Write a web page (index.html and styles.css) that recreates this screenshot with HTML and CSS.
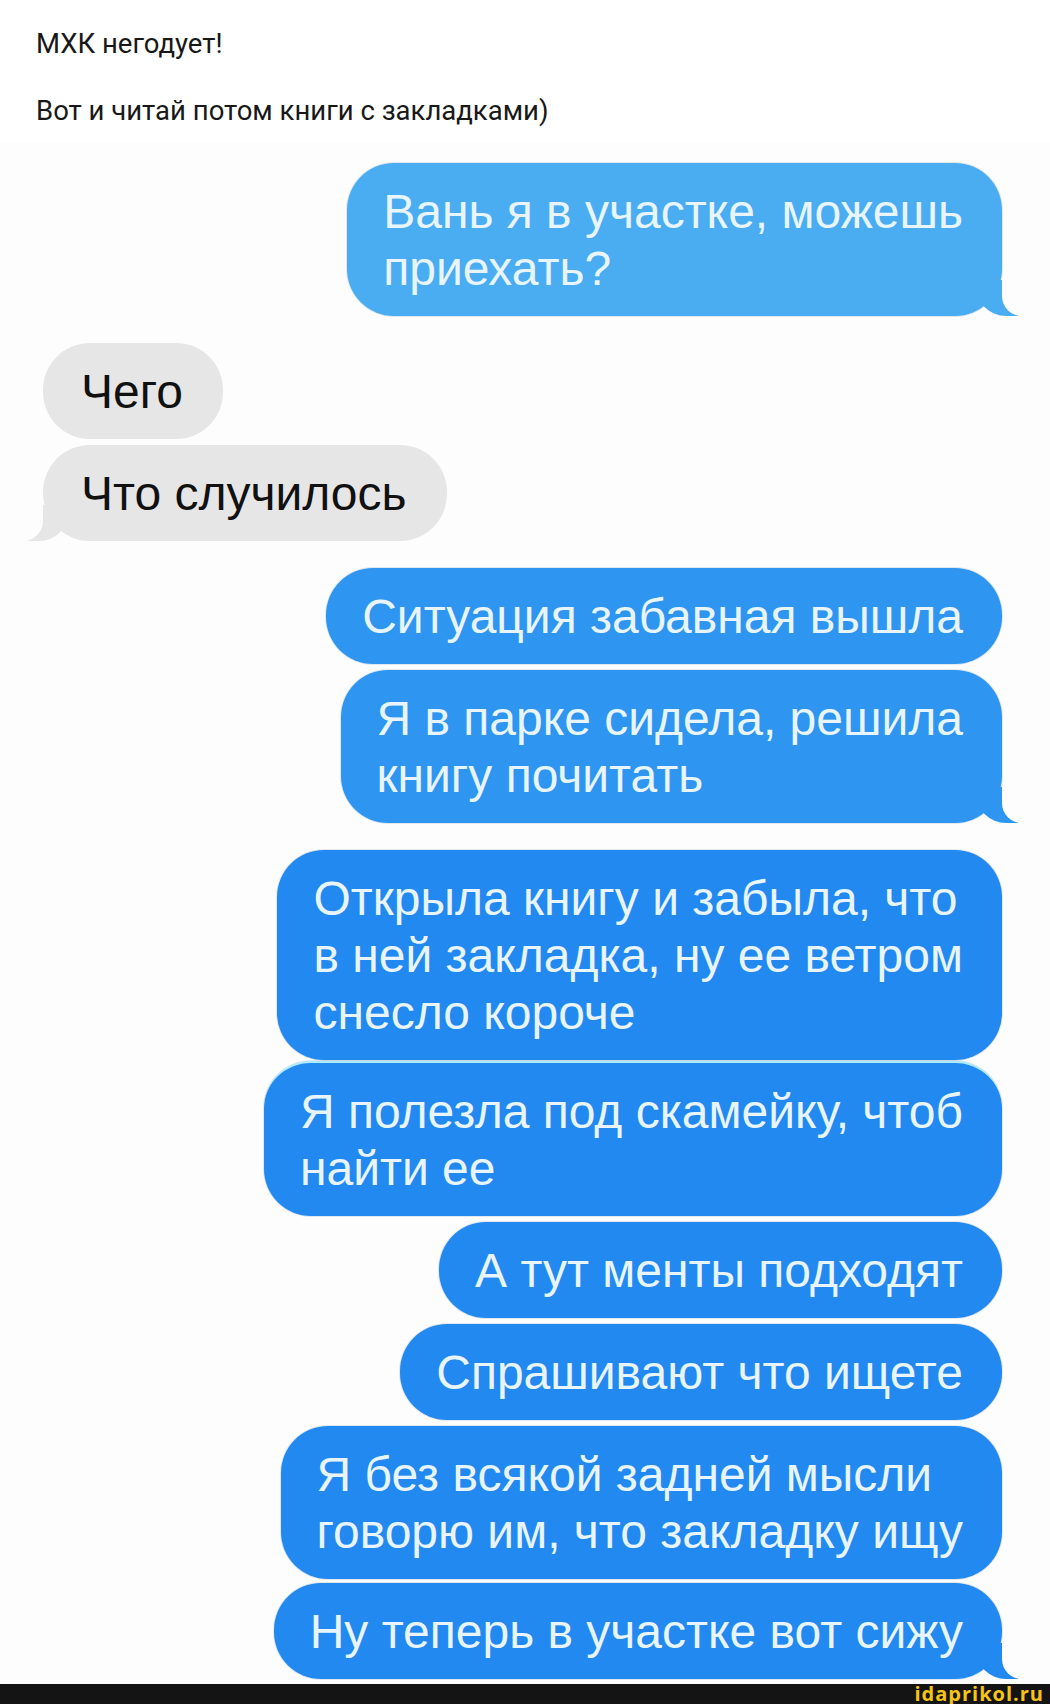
FILE: index.html
```html
<!DOCTYPE html>
<html lang="ru">
<head>
    <meta charset="UTF-8">
    <meta name="viewport" content="width=device-width, initial-scale=1.0">
    <title>МХК негодует!</title>
    <link rel="stylesheet" href="styles.css">
</head>
<body>
    <header class="intro">
        <p>МХК негодует!</p>
        <p>Вот и читай потом книги с закладками)</p>
    </header>
    <main class="chat">
        <div class="msg out light tail first">Вань я в участке, можешь<br>приехать?</div>

        <div class="msg in group">Чего</div>
        <div class="msg in tail">Что случилось</div>

        <div class="msg out mid group">Ситуация забавная вышла</div>
        <div class="msg out mid tail">Я в парке сидела, решила<br>книгу почитать</div>

        <div class="msg out group">Открыла книгу и забыла, что<br>в ней закладка, ну ее ветром<br>снесло короче</div>
        <div class="msg out seam">Я полезла под скамейку, чтоб<br>найти ее</div>
        <div class="msg out">А тут менты подходят</div>
        <div class="msg out">Спрашивают что ищете</div>
        <div class="msg out">Я без всякой задней мысли<br>говорю им, что закладку ищу</div>
        <div class="msg out tail last">Ну теперь в участке вот сижу</div>
    </main>
    <footer class="watermark">
        <span>idaprikol.ru</span>
    </footer>
</body>
</html>
```

FILE: styles.css
```css
body {
    margin: 0;
    background-color: #fff;
    font-family: Roboto, "Liberation Sans", sans-serif;
}
.intro {
    padding: 28px 36px 16px;
    color: #181818;
    font-size: 27.5px;
}
.intro p {
    margin: 0;
    line-height: 32px;
}
.intro p + p {
    margin-top: 35px;
}
.chat {
    background-color: #fdfdfd;
    padding: 20px 48px 5px 43px;
    display: flex;
    flex-direction: column;
    align-items: flex-end;
    font-family: "Liberation Sans", Arial, sans-serif;
    font-size: 48px;
    line-height: 57px;
}
.msg {
    position: relative;
    padding: 19.5px 39px 19.5px 36px;
    border-radius: 47px;
    margin-top: 6px;
    white-space: nowrap;
    background-color: #2189f0;
    color: #e8f5ff;
    box-shadow: 0 0 0 1px rgba(20, 70, 130, 0.12);
}
.msg.light {
    background-color: #4aadf2;
}
.msg.mid {
    background-color: #2e95f0;
}
.msg.in {
    align-self: flex-start;
    background-color: #e6e6e6;
    color: #111;
    padding: 19.5px 40px 19.5px 38px;
    box-shadow: none;
}
.msg.first {
    margin-top: 0;
}
.msg.group {
    margin-top: 27px;
}
.msg.seam {
    margin-top: 1px;
    border-top: 2px solid #a9ecff;
}
.msg.last {
    margin-top: 4px;
}

/* bubble tails */
.msg.tail::before {
    content: "";
    position: absolute;
    bottom: 0;
    right: -16px;
    width: 42px;
    height: 36px;
    background: inherit;
    border-bottom-left-radius: 30px;
}
.msg.tail::after {
    content: "";
    position: absolute;
    bottom: 0;
    right: -22px;
    width: 22px;
    height: 38px;
    background-color: #fdfdfd;
    border-bottom-left-radius: 20px;
}
.msg.in.tail::before {
    right: auto;
    left: -16px;
    border-bottom-left-radius: 0;
    border-bottom-right-radius: 30px;
}
.msg.in.tail::after {
    right: auto;
    left: -22px;
    border-bottom-left-radius: 0;
    border-bottom-right-radius: 20px;
}
.watermark {
    background-color: #141414;
    height: 20px;
    padding-right: 6px;
    text-align: right;
}
.watermark span {
    color: #f6c416;
    font-family: "Open Sans", sans-serif;
    font-weight: bold;
    font-size: 20px;
    letter-spacing: 1px;
    line-height: 20px;
}
```
